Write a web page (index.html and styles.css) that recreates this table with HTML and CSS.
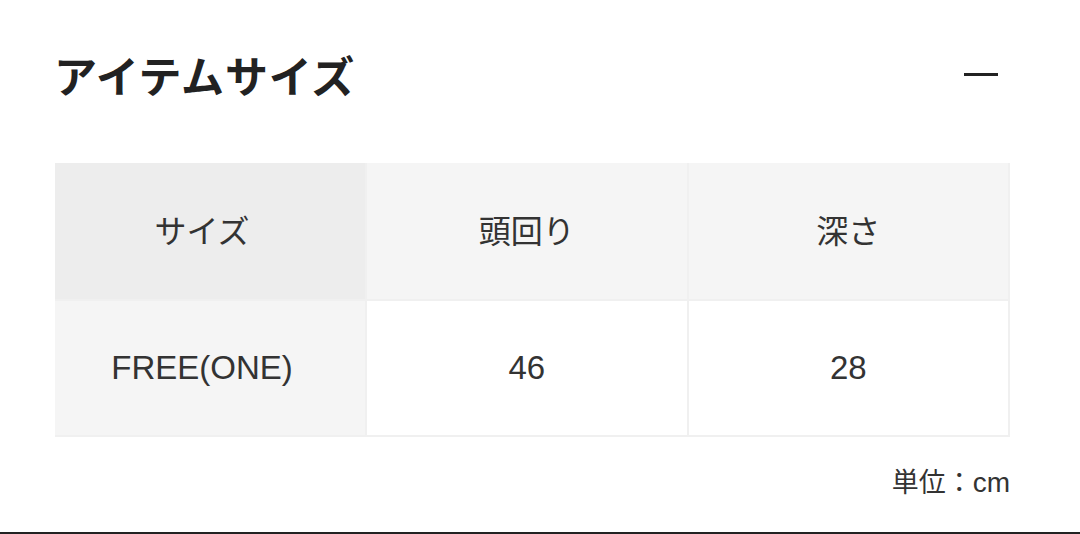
FILE: index.html
```html
<!DOCTYPE html>
<html lang="ja">
<head>
<meta charset="utf-8">
<link rel="stylesheet" href="styles.css">
</head>
<body>
<section class="panel">
  <div class="head">
    <h2 class="title">アイテムサイズ</h2>
    <span class="toggle" aria-label="閉じる"></span>
  </div>
  <table class="size-table">
    <tr class="row-head">
      <th class="c1">サイズ</th>
      <th>頭回り</th>
      <th>深さ</th>
    </tr>
    <tr class="row-body">
      <td class="c1">FREE(ONE)</td>
      <td>46</td>
      <td>28</td>
    </tr>
  </table>
  <p class="unit">単位：<span class="lat">cm</span></p>
</section>
</body>
</html>
```
FILE: styles.css
```css
html, body {
  margin: 0;
  padding: 0;
  background: #fff;
}
body {
  width: 1080px;
  height: 534px;
  overflow: hidden;
  font-family: "Liberation Sans", "Noto Sans CJK JP", sans-serif;
  color: #333;
}
.panel {
  box-sizing: border-box;
  height: 534px;
  padding: 49px 70px 0 55px;
  border-bottom: 2px solid #222;
}
.head {
  display: flex;
  align-items: center;
  justify-content: space-between;
  height: 50px;
}
.title {
  margin: 0 0 0 -1px;
  font-family: "Noto Sans CJK JP", sans-serif;
  font-size: 43px;
  font-weight: 700;
  line-height: 50px;
  color: #222;
  letter-spacing: 0.8px;
}
.toggle {
  display: block;
  width: 34px;
  height: 3px;
  background: #222;
  margin-right: 12px;
}
.size-table {
  margin-top: 64px;
  width: 955px;
  border-collapse: collapse;
  table-layout: fixed;
}
.size-table th, .size-table td {
  font-family: "Liberation Sans", "Noto Sans CJK JP", sans-serif;
  font-weight: 400;
  font-size: 33px;
  color: #333;
  text-align: center;
  vertical-align: middle;
  border: 2px solid #f0f0f0;
  padding: 0;
}
.size-table th {
  font-family: "Noto Sans CJK JP", sans-serif;
  font-size: 32px;
  padding-bottom: 4px;
}
.row-head th {
  height: 132px;
  background: #f5f5f5;
  border-top: none;
}
.row-head th.c1 {
  background: #ededed;
}
.row-body td {
  height: 134px;
  background: #fff;
}
.row-body td.c1 {
  background: #f5f5f5;
}
.size-table .c1 {
  width: 294px;
  border-left: none;
  padding-right: 16px;
}
.unit {
  margin: 28px 0 0;
  text-align: right;
  font-family: "Noto Sans CJK JP", sans-serif;
  font-size: 27px;
  line-height: 32px;
  color: #333;
}
.unit .lat {
  font-family: "Liberation Sans", sans-serif;
  font-size: 28px;
}
```
